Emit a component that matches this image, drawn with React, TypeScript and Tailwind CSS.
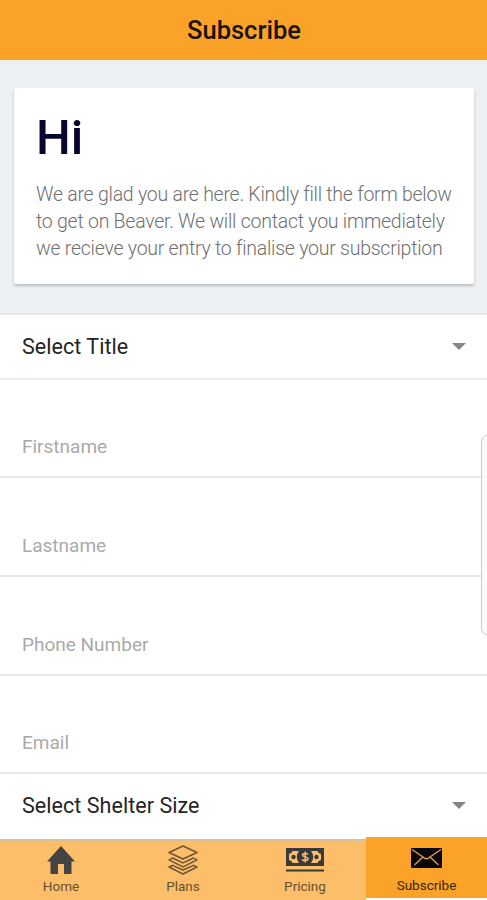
import React from 'react';

const fields = [
    { id: 'firstname', label: 'Firstname', height: 'h-[98px]', border: 'border-b-2' },
    { id: 'lastname', label: 'Lastname', height: 'h-[99px]', border: 'border-b-2' },
    { id: 'phone', label: 'Phone Number', height: 'h-[99px]', border: 'border-b-2' },
    { id: 'email', label: 'Email', height: 'h-[98px]', border: 'border-b-2' },
];

const HomeIcon = () => (
    <svg className="w-[28px] h-[30px]" viewBox="0 0 28 30" fill="#444444">
        <path d="M14 1 0 16.500h3.500V29h7.500V19h6v10h7.500V16.500H28z" />
    </svg>
);

const PlansIcon = () => (
    <svg className="w-[30px] h-[30px]" viewBox="0 0 30 30" fill="none" stroke="#6b5435" strokeWidth="1.400" strokeLinejoin="round">
        <path d="M15 1 29 7.500 15 14 1 7.500z" />
        <path d="M4.500 13 1 14.800l14 7 14-7L25.500 13 15 17.800z" />
        <path d="M4.500 20.300 1 22l14 7 14-7-3.500-1.700L15 25z" />
    </svg>
);

const PricingIcon = () => (
    <svg className="w-[38px] h-[24px]" viewBox="0 0 38 24" fill="#38393b">
        <rect width="38" height="18" />
        <path d="M6.500 3H13a10 10 0 0 0 0 12H6.500A4 4 0 0 0 3 12V6a4 4 0 0 0 3.500-3zM31.500 3H25a10 10 0 0 1 0 12h6.500a4 4 0 0 1 3.500-3V6a4 4 0 0 1-3.500-3z" fill="#fcbe69" />
        <circle cx="7.500" cy="9" r="2.200" />
        <circle cx="30.500" cy="9" r="2.200" />
        <path d="M22 6.200c-1-1-5.500-1.200-5.500.8 0 2.200 5.500 1.500 5.500 4 0 2-4.500 2-6 .6M19.200 3.500v11" fill="none" stroke="#fcbe69" strokeWidth="1.500" />
        <rect y="21.500" width="38" height="2" />
    </svg>
);

const MailIcon = () => (
    <svg className="w-[31px] h-[20px]" viewBox="0 0 31 20">
        <rect width="31" height="20" rx="1" fill="#070707" />
        <path d="M1 1.500 12 9q3.500 3.500 7 0l11-7.500M3.500 17l8.500-8M27.500 17 19 9" fill="none" stroke="#e8a04a" strokeWidth="1.300" />
    </svg>
);

const tabs = [
    { label: 'Home', icon: <HomeIcon /> },
    { label: 'Plans', icon: <PlansIcon /> },
    { label: 'Pricing', icon: <PricingIcon /> },
];

const SelectRow: React.FC<{ label: string; className: string }> = ({ label, className }) => (
    <div className={`flex items-center justify-between pl-[22px] pr-[21px] ${className}`}>
        <span className="text-[21.500px] leading-7 tracking-[0.05px] text-[#252525]">{label}</span>
        <svg className="w-[14px] h-[7px]" viewBox="0 0 14 7" fill="#858585">
            <path d="M0 0h14L7 7z" />
        </svg>
    </div>
);

const App: React.FC = () => {
    return (
        <div className="relative flex flex-col w-full h-[900px] overflow-hidden bg-white font-['Roboto',sans-serif]">
            {/* Header */}
            <header className="h-[61px] shrink-0 border-b border-[#fdf3e4] bg-[#faa328] text-center">
                <h1 className="pl-[1px] text-[25.500px] leading-[60px] font-medium text-[#1a1208]">Subscribe</h1>
            </header>

            {/* Welcome card */}
            <section className="h-[254px] shrink-0 border-b-2 border-[#e6e8eb] bg-[#ecf0f4] pt-[27px] pl-[14px] pr-[13px]">
                <div className="h-[196px] rounded-[2px] bg-white pl-[22px] pt-[22px] shadow-[0_2px_3px_rgba(0,0,0,0.22)]">
                    <h2 className="text-[49px] leading-[56px] font-medium text-[#08062f]">Hi</h2>
                    <p className="mt-[15px] text-[19.500px] leading-[27px] tracking-[-0.250px] font-light text-[#707070] whitespace-nowrap">
                        We are glad you are here. Kindly fill the form below
                        <br />
                        to get on Beaver. We will contact you immediately
                        <br />
                        we recieve your entry to finalise your subscription
                    </p>
                </div>
            </section>

            {/* Form */}
            <SelectRow label="Select Title" className="h-[65px] shrink-0 border-b-2 border-[#ececec]" />
            {fields.map((field) => (
                <div key={field.id} className={`flex shrink-0 items-end pl-[22px] pb-[17px] border-[#e8e8e8] ${field.height} ${field.border}`}>
                    <span className="text-[19px] leading-6 text-[#aaaaaa]">{field.label}</span>
                </div>
            ))}
            <SelectRow label="Select Shelter Size" className="h-[63px] shrink-0" />

            {/* Tab bar */}
            <nav className="mt-auto grid h-[63px] shrink-0 grid-cols-[122px_122px_122px_1fr]">
                {tabs.map((tab) => (
                    <div key={tab.label} className="mt-[2px] flex flex-col items-center border-t-2 border-[#d9bf93] bg-[#fcbe69] pt-[3px]">
                        <div className="flex h-[31px] items-center">{tab.icon}</div>
                        <span className="mt-[3px] text-[13.500px] leading-4 text-[#65502f]">{tab.label}</span>
                    </div>
                ))}
                <div className="mb-[2px] flex flex-col items-center bg-[#faa328] pt-[11px]">
                    <MailIcon />
                    <span className="mt-[9px] text-[13.500px] leading-4 text-[#38260b]">Subscribe</span>
                </div>
            </nav>

            {/* Edge panel handle */}
            <div className="absolute top-[434px] -right-[10px] h-[202px] w-[16px] rounded-[8px] border border-[#cccccc] bg-[#fafafa]/80"></div>
        </div>
    );
};

export default App;
